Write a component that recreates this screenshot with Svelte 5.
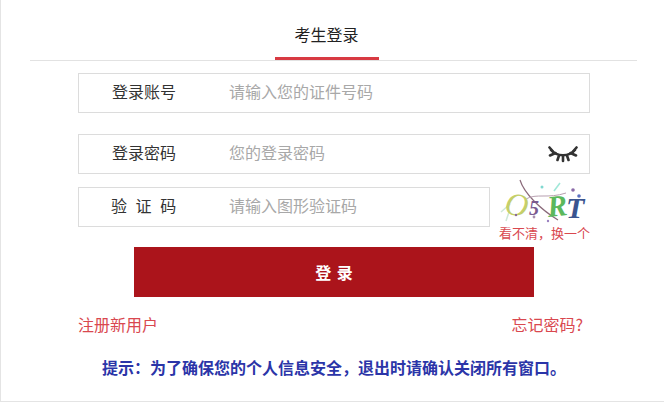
<script>
  let { } = $props();
  const tabs = ["考生登录"];
</script>

<div class="page">
  <div class="tabs">
    {#each tabs as tab}
      <div class="tab">{tab}</div>
    {/each}
  </div>

  <form class="form" onsubmit={(e) => e.preventDefault()}>
    <div class="row first">
      <span class="label">登录账号</span>
      <span class="hint-text">请输入您的证件号码</span>
    </div>

    <div class="row second">
      <span class="label">登录密码</span>
      <span class="hint-text">您的登录密码</span>
      <svg class="eye" width="30" height="18" viewBox="0 0 30 18" fill="none" stroke="#333" stroke-width="2.6" stroke-linecap="round">
        <path d="M3 5C9 12 21 12 27 5" />
        <path d="M1.5 2.5L5 6.5M2 10.5L7.5 8M9.5 15L11 10.5M15 16V11.500M20.500 15L19 10.500M28 10.500L22.500 8M28.500 2.500L25 6.500" />
      </svg>
    </div>

    <div class="captcha-line">
      <div class="row short">
        <span class="label spaced">验 证 码</span>
        <span class="hint-text">请输入图形验证码</span>
      </div>
      <div class="captcha">
        <svg width="90" height="46" viewBox="0 0 90 46">
          <path d="M20 1C24 14 40 30 58 41" stroke="#8a6a7a" stroke-width="1.200" fill="none" />
          <path d="M26 20C36 14 48 20 66 14" stroke="#b8a0b0" stroke-width="1" fill="none" />
          <path d="M1 33L10 25M6 42L9 33" stroke="#cfe8d8" stroke-width="1.500" />
          <path d="M54 12L60 4" stroke="#a0e8d8" stroke-width="1.500" />
          <text x="5" y="36" class="c" fill="#c5cf6a" font-size="32" transform="rotate(10 14 26)">O</text>
          <text x="29" y="36" class="c" fill="#7a5a90" font-size="20" font-weight="700">5</text>
          <text x="47" y="37" class="c" fill="#5cb85c" font-size="30" font-weight="700" transform="rotate(-6 58 26)">R</text>
          <text x="66" y="39" class="c" fill="#3a5590" font-size="30" font-weight="700">T</text>
          <circle cx="73" cy="11" r="1.800" fill="#8a6aa8" />
          <circle cx="79" cy="17" r="1.800" fill="#5a70c0" />
          <circle cx="42" cy="8" r="1.500" fill="#80d8d0" />
          <circle cx="16" cy="36" r="1.200" fill="#8a6a9a" />
          <circle cx="34" cy="38" r="1.400" fill="#a890b0" />
          <circle cx="48" cy="42" r="1.200" fill="#9a80c0" />
        </svg>
        <span class="refresh">看不清，换一个</span>
      </div>
    </div>

    <button class="submit" type="submit">登 录</button>

    <div class="links">
      <span>注册新用户</span>
      <span>忘记密码?</span>
    </div>
  </form>

  <p class="notice">提示：为了确保您的个人信息安全，退出时请确认关闭所有窗口。</p>
</div>

<style>
  :global(body) {
    margin: 0;
    background: #fff;
    font-family: "Noto Sans CJK SC", "Liberation Sans", sans-serif;
  }

  .page {
    box-sizing: border-box;
    width: 664px;
    height: 402px;
    padding: 0 27px 0 29px;
    border-left: 1px solid #e4e4e4;
    border-bottom: 1px solid #e4e4e4;
  }

  .tabs {
    display: flex;
    justify-content: center;
    height: 61px;
    box-sizing: border-box;
    border-bottom: 1px solid #e2e2e2;
    padding-right: 14px;
  }

  .tab {
    box-sizing: border-box;
    width: 104px;
    height: 60px;
    padding-top: 22px;
    line-height: 24px;
    text-align: center;
    font-size: 16px;
    color: #222;
    border-bottom: 3px solid #d83a42;
  }

  .form {
    display: flex;
    flex-direction: column;
    margin: 12px 47px 0 48px;
  }

  .row {
    box-sizing: border-box;
    display: flex;
    align-items: center;
    height: 40px;
    padding-bottom: 4px;
    border: 1px solid #dcdcdc;
  }

  .second {
    margin-top: 21px;
  }

  .label {
    width: 150px;
    padding-left: 33px;
    padding-bottom: 1px;
    box-sizing: border-box;
    font-size: 16px;
    color: #333;
    flex: none;
  }

  .spaced {
    padding-left: 32px;
    word-spacing: 5px;
  }

  .hint-text {
    font-size: 16px;
    color: #a8a8a8;
  }

  .eye {
    margin: 4px 11px 0 auto;
  }

  .captcha-line {
    display: flex;
    margin-top: 13px;
    height: 40px;
  }

  .short {
    width: 412px;
    flex: none;
  }

  .captcha {
    display: flex;
    flex-direction: column;
    align-items: flex-end;
    width: 100px;
    margin-top: -8px;
  }

  .captcha svg {
    flex: none;
  }

  .c {
    font-family: "Liberation Serif", serif;
    font-style: italic;
  }

  .refresh {
    flex: none;
    font-size: 13px;
    line-height: 16px;
    color: #d9484f;
    white-space: nowrap;
  }

  .submit {
    display: block;
    width: 400px;
    height: 50px;
    margin: 20px 0 0 56px;
    border: 0;
    background: #ab141b;
    color: #fff;
    font-family: inherit;
    font-size: 16px;
    font-weight: 700;
    word-spacing: 2px;
  }

  .links {
    display: flex;
    justify-content: space-between;
    margin: 15px 7px 0 0;
    font-size: 16px;
    line-height: 24px;
    color: #d9484f;
  }

  .notice {
    margin: 19px 0 0 0;
    text-align: center;
    padding-left: 1px;
    font-size: 16px;
    line-height: 24px;
    font-weight: 700;
    color: #2b35a8;
  }
</style>
